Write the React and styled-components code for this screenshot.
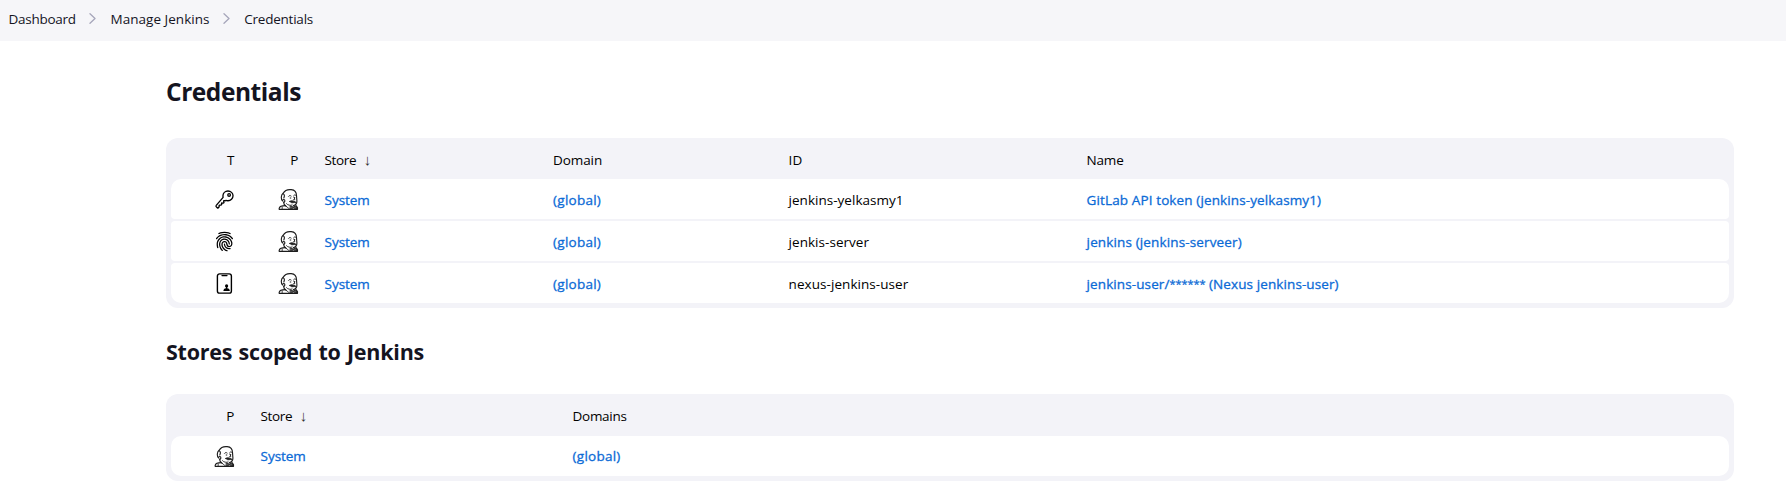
import React from "react";
import styled, { createGlobalStyle } from "styled-components";
import { IoKeyOutline, IoFingerPrint } from "react-icons/io5";

const GlobalStyle = createGlobalStyle`
  body {
    margin: 0;
    background: #fff;
    color: #14141f;
    font-family: "Open Sans", "Noto Sans", sans-serif;
    font-size: 13.5px;
  }
`;

const Breadcrumbs = styled.nav`
  display: flex;
  align-items: center;
  box-sizing: border-box;
  height: 41px;
  padding: 0 0 3px 8.5px;
  background: #f6f6f9;
`;

const Text = styled.span`
  letter-spacing: ${(p) => p.$track || 0}px;
  white-space: nowrap;
`;

const ChevronIcon = styled.svg`
  width: 7px;
  height: 11px;
  margin: 0 14.2px 1px 13.5px;
  fill: none;
  stroke: #a6a6ba;
  stroke-width: 1.3;
  stroke-linecap: round;
  stroke-linejoin: round;
`;

const Main = styled.main`
  padding: 35px 52px 0 166px;
`;

const Title = styled.h1`
  margin: 0 0 30px;
  font-size: 24.5px;
  line-height: 32px;
  font-weight: 700;
  letter-spacing: -0.45px;
`;

const Subtitle = styled.h2`
  margin: 29px 0 27px;
  font-size: 21.5px;
  line-height: 30px;
  font-weight: 700;
  letter-spacing: -0.22px;
  word-spacing: 0.9px;
`;

const Table = styled.div`
  display: flex;
  flex-direction: column;
  padding: 0 5px 5px;
  border-radius: 12px;
  background: #f3f3f8;
  color: #000;
`;

const Row = styled.div`
  display: grid;
  grid-template-columns: ${(p) => p.$columns};
  align-items: center;
`;

const HeaderRow = styled(Row)`
  box-sizing: border-box;
  height: ${(p) => p.$height}px;
  padding-top: 2.5px;
`;

const Body = styled.div`
  display: flex;
  flex-direction: column;
  gap: 2px;
`;

const BodyRow = styled(Row)`
  box-sizing: border-box;
  height: 40px;
  padding-top: ${(p) => (p.$compact ? 0 : 1.5)}px;
  border-radius: 4px;
  background: #fff;

  &:first-child {
    border-top-left-radius: 10px;
    border-top-right-radius: 10px;
  }
  &:last-child {
    border-bottom-left-radius: 10px;
    border-bottom-right-radius: 10px;
  }
`;

const IconCell = styled.div`
  display: flex;
  justify-content: flex-end;
  padding-right: ${(p) => p.$inset || 0}px;

  svg {
    display: block;
  }
`;

const Cell = styled.div`
  padding-left: 25.6px;
  white-space: nowrap;
`;

const Link = styled.a`
  color: #0b6ad6;
  text-decoration: none;
  letter-spacing: ${(p) => p.$track || 0}px;
  -webkit-text-stroke: 0.3px #0b6ad6;
`;

const Mask = styled.span`
  font-size: 11px;
  line-height: 0;
  letter-spacing: -0.07px;
  vertical-align: 1.5px;
`;

const SortArrow = styled.span`
  display: inline-block;
  margin-left: 7.5px;
  color: #333;
  font-family: "Noto Sans", "Open Sans", sans-serif;
  font-size: 15px;
  line-height: 1;
`;

const Chevron = () => (
  <ChevronIcon viewBox="0 0 7 11">
    <path d="M1 0.8 6 5.5 1 10.2" />
  </ChevronIcon>
);

const HeadIcon = () => (
  <svg width="21" height="21" viewBox="-1.5 0 63 63" fill="none" stroke="#1c1c1c" strokeWidth="3.4" strokeLinecap="round" strokeLinejoin="round">
    <path d="M12 36C7 30 7 18 14 13 19 4 29 1 38 2 49 3 54 11 54 20L55 33C56 41 52 48 45 50" />
    <path d="M14 14C19 16 18 23 16 27M12 34C14 31 19 30 19 35 19 39 17 40 15 39 15 45 19 49 23 52" />
    <path d="M30 22C32 19 36 19 38 21M46 19C48 17 50 18 52 19" strokeWidth="2.8" />
    <path d="M46 24 49 31 44 33" strokeWidth="2.8" />
    <path d="M34 37C38 34 42 35 45 37 48 36 52 38 52 41 48 40 46 41 44 41 40 42 36 41 34 37Z" fill="#222" strokeWidth="2.6" />
    <path d="M24 44C28 49 35 50 41 48" strokeWidth="2.6" />
    <path d="M21 50C12 50 3 53 2 58V61H57V56C56 52 53 51 50 51" />
    <path d="M11 54V60M23 52 33 60" strokeWidth="2.4" />
    <path d="M36 51 44 54 54 50V60L45 57 36 60Z" fill="#555" strokeWidth="2.6" />
    <path d="M35 27H37M48 26H49" strokeWidth="3" />
  </svg>
);

const PhoneIcon = () => (
  <svg width="21" height="21" viewBox="0 0 21 21" fill="none" stroke="#000" strokeWidth="1.4">
    <rect x="3.4" y="0.9" width="14" height="19.2" rx="2.2" />
    <path d="M8 2.6h5" strokeWidth="1.3" strokeLinecap="round" />
    <g fill="#000" stroke="none">
      <circle cx="12.6" cy="12.9" r="1.6" />
      <path d="M12 14h1.2v1.3c1.6.2 2.6 1 2.6 2.8H9.4c0-1.8 1-2.6 2.6-2.8z" />
    </g>
  </svg>
);

const TYPE_ICONS = {
  key: <IoKeyOutline size={21} color="#000" />,
  fingerprint: <IoFingerPrint size={21} color="#000" />,
  phone: <PhoneIcon />,
};

const CREDENTIALS = [
  {
    type: "key",
    id: "jenkins-yelkasmy1",
    idTrack: 0.02,
    name: "GitLab API token (jenkins-yelkasmy1)",
    nameTrack: 0.12,
  },
  {
    type: "fingerprint",
    id: "jenkis-server",
    idTrack: 0.04,
    name: "jenkins (jenkins-serveer)",
    nameTrack: 0.14,
  },
  {
    type: "phone",
    id: "nexus-jenkins-user",
    idTrack: 0.06,
    name: (
      <>
        jenkins-user/<Mask>******</Mask> (Nexus jenkins-user)
      </>
    ),
    nameTrack: 0.1,
  },
];

const CREDENTIAL_COLUMNS = "64px 64px 228.5px 235.5px 298px 1fr";
const STORE_COLUMNS = "64px 312px 1fr";

const StoreHeading = () => (
  <Cell>
    <Text $track={-0.38}>Store</Text>
    <SortArrow>↓</SortArrow>
  </Cell>
);

export default function App() {
  return (
    <>
      <GlobalStyle />
      <Breadcrumbs>
        <Text $track={-0.26}>Dashboard</Text>
        <Chevron />
        <Text $track={0.03}>Manage Jenkins</Text>
        <Chevron />
        <Text $track={-0.22}>Credentials</Text>
      </Breadcrumbs>
      <Main>
        <Title>Credentials</Title>
        <Table>
          <HeaderRow $columns={CREDENTIAL_COLUMNS} $height={41}>
            <IconCell $inset={0.7}>T</IconCell>
            <IconCell $inset={0.7}>P</IconCell>
            <StoreHeading />
            <Cell><Text $track={-0.1}>Domain</Text></Cell>
            <Cell><Text $track={0.2}>ID</Text></Cell>
            <Cell><Text $track={-0.2}>Name</Text></Cell>
          </HeaderRow>
          <Body>
            {CREDENTIALS.map((c) => (
              <BodyRow key={c.id} $columns={CREDENTIAL_COLUMNS}>
                <IconCell>{TYPE_ICONS[c.type]}</IconCell>
                <IconCell><HeadIcon /></IconCell>
                <Cell><Link $track={-0.05}>System</Link></Cell>
                <Cell><Link $track={0.25}>(global)</Link></Cell>
                <Cell><Text $track={c.idTrack}>{c.id}</Text></Cell>
                <Cell><Link $track={c.nameTrack}>{c.name}</Link></Cell>
              </BodyRow>
            ))}
          </Body>
        </Table>
        <Subtitle>Stores scoped to Jenkins</Subtitle>
        <Table>
          <HeaderRow $columns={STORE_COLUMNS} $height={42}>
            <IconCell $inset={0.7}>P</IconCell>
            <StoreHeading />
            <Cell><Text $track={-0.3}>Domains</Text></Cell>
          </HeaderRow>
          <Body>
            <BodyRow $columns={STORE_COLUMNS} $compact>
              <IconCell><HeadIcon /></IconCell>
              <Cell><Link $track={-0.05}>System</Link></Cell>
              <Cell><Link $track={0.25}>(global)</Link></Cell>
            </BodyRow>
          </Body>
        </Table>
      </Main>
    </>
  );
}
